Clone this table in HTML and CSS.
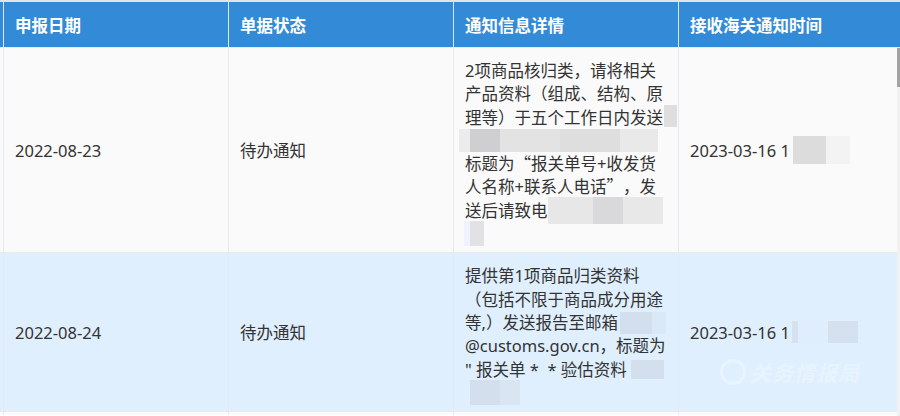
FILE: index.html
```html
<!DOCTYPE html>
<html lang="zh-CN">
<head>
<meta charset="utf-8">
<title>通知列表</title>
<link rel="stylesheet" href="styles.css">
</head>
<body>
<div class="topbar"></div>
<div class="table">
  <div class="head">
    <div class="th th0"></div>
    <div class="th">申报日期</div>
    <div class="th">单据状态</div>
    <div class="th">通知信息详情</div>
    <div class="th th-last">接收海关通知时间</div>
  </div>
  <div class="body">
    <div class="rows">
      <div class="row row-a">
        <div class="td td0"></div>
        <div class="td">2022-08-23</div>
        <div class="td">待办通知</div>
        <div class="td detail">
          <span class="ln">2项商品核归类，请将相关</span>
          <span class="ln">产品资料（组成、结构、原</span>
          <span class="ln">理等）于五个工作日内发送<i class="blur b-a1"></i></span>
          <span class="ln ln-blur"><i class="blur b-a2"></i><i class="blur b-a3"></i><i class="blur b-a4"></i><i class="blur b-a5"></i><i class="blur b-a6"></i></span>
          <span class="ln">标题为<span class="cjk">“</span>报关单号+收发货</span>
          <span class="ln">人名称+联系人电话<span class="cjk">”</span>，发</span>
          <span class="ln">送后请致电<i class="blur b-a7"></i><i class="blur b-a8"></i><i class="blur b-a9"></i></span>
          <span class="ln"><i class="blur b-a10"></i></span>
        </div>
        <div class="td td-last">2023-03-16 1<i class="blur b-t1"></i><i class="blur b-t2"></i></div>
      </div>
      <div class="row row-b">
        <div class="td td0"></div>
        <div class="td">2022-08-24</div>
        <div class="td">待办通知</div>
        <div class="td detail">
          <span class="ln">提供第1项商品归类资料</span>
          <span class="ln">（包括不限于商品成分用途</span>
          <span class="ln">等,）发送报告至邮箱<i class="blur b-b1"></i><i class="blur b-b2"></i></span>
          <span class="ln">@customs.gov.cn，标题为</span>
          <span class="ln">"&nbsp;报关单&nbsp;*&nbsp;&nbsp;*&nbsp;验估资料<i class="blur b-b3"></i></span>
          <span class="ln"><i class="blur b-b4"></i><i class="blur b-b5"></i></span>
        </div>
        <div class="td td-last">2023-03-16 1<i class="blur b-t3"></i><i class="blur b-t4"></i><i class="blur b-t5"></i>
          <span class="watermark"><span class="wm-ring"></span>关务情报局</span>
        </div>
      </div>
      <div class="row row-a row-c">
        <div class="td td0"></div>
        <div class="td"></div>
        <div class="td"></div>
        <div class="td"></div>
        <div class="td td-last"></div>
      </div>
    </div>
    <div class="scroll"><div class="thumb"></div></div>
  </div>
</div>
</body>
</html>
```
FILE: styles.css
```css
html, body {
  margin: 0;
  padding: 0;
}
body {
  width: 900px;
  height: 416px;
  overflow: hidden;
  background: #ffffff;
  font-family: "Noto Sans", "Noto Sans CJK SC", sans-serif;
  font-size: 16.5px;
  color: #333333;
}
.cjk {
  font-family: "Noto Sans CJK SC", sans-serif;
}
.topbar {
  height: 2px;
  background: #e3e3e3;
}
.head {
  display: grid;
  grid-template-columns: 4px 225px 225px 225px 1fr;
  height: 46px;
  background: #338bd8;
  border-bottom: 1px solid #e6e9ed;
  box-sizing: border-box;
}
.th {
  display: flex;
  align-items: center;
  padding-left: 11px;
  color: #ffffff;
  font-weight: 700;
  border-right: 1px solid #dce7f2;
  white-space: nowrap;
}
.th0 {
  padding: 0;
}
.th-last {
  border-right: none;
}
.body {
  display: flex;
}
.rows {
  width: 897px;
}
.row {
  display: grid;
  grid-template-columns: 4px 225px 225px 225px 1fr;
  border-bottom: 1px solid #e8eaec;
}
.row-a {
  background: #fafafa;
}
.row-b {
  background: #e0effe;
}
.row-c {
  height: 3px;
  border-bottom: none;
}
.td {
  display: flex;
  align-items: center;
  padding: 0 11px;
  border-right: 1px solid #e6e9ed;
  white-space: nowrap;
  position: relative;
}
.td0 {
  padding: 0;
}
.td-last {
  border-right: none;
}
.detail {
  display: block;
  padding: 11px 11px 7px;
  line-height: 23.3px;
}
.ln {
  display: flex;
  align-items: center;
  height: 23.3px;
  white-space: nowrap;
}
.blur {
  display: inline-block;
  flex: none;
}
.ln-blur {
  margin-left: -6px;
}
/* row A blurs */
.b-a1 { width: 13px; height: 22px; background: #dedede; margin-left: 1px; position: relative; top: -1px; }
.b-a2 { width: 11px; height: 23px; background: #ececec; }
.b-a3 { width: 30px; height: 23px; background: #cfcfd1; }
.b-a4 { width: 60px; height: 23px; background: #e3e3e3; }
.b-a5 { width: 60px; height: 23px; background: #dedede; }
.b-a6 { width: 38px; height: 23px; background: #e9e9e9; }
.b-a7 { width: 45px; height: 27px; background: #e7e7e7; }
.b-a8 { width: 30px; height: 27px; background: #d9d9db; }
.b-a9 { width: 40px; height: 27px; background: #e8e8e8; }
.b-a10 { width: 20px; height: 25px; background: linear-gradient(90deg, #eef3ff 0 30%, #e2e2e4 30%); margin-left: -1px; }
.b-t1 { width: 33px; height: 28px; background: #dcdcdc; margin-left: 3px; }
.b-t2 { width: 24px; height: 28px; background: #f3f3f3; }
/* row B blurs */
.b-b1 { width: 32px; height: 22px; background: #d3dfec; margin-left: 2px; }
.b-b2 { width: 14px; height: 22px; background: #dbe8f5; }
.b-b3 { width: 33px; height: 19px; background: #d3dfec; margin-left: 4px; }
.b-b4 { width: 30px; height: 25px; background: #d3dfec; margin-left: 5px; }
.b-b5 { width: 20px; height: 25px; background: #d9e5f1; }
.b-t3 { width: 6px; height: 22px; background: #d5e1ee; margin-left: 2px; }
.b-t4 { width: 30px; height: 22px; background: #dfedfc; }
.b-t5 { width: 30px; height: 22px; background: #d5e1ee; }
.watermark {
  position: absolute;
  left: 41px;
  top: 104px;
  display: flex;
  align-items: center;
  gap: 4px;
  font-size: 21px;
  font-style: italic;
  font-weight: 700;
  color: rgba(255, 255, 255, 0.3);
  letter-spacing: 1px;
}
.wm-ring {
  width: 26px;
  height: 26px;
  border: 3px solid rgba(255, 255, 255, 0.3);
  border-radius: 50%;
  box-sizing: border-box;
}
.scroll {
  width: 3px;
  height: 368px;
  background: #f1f1f1;
}
.thumb {
  height: 39px;
  background: #a3a3a3;
}
```
